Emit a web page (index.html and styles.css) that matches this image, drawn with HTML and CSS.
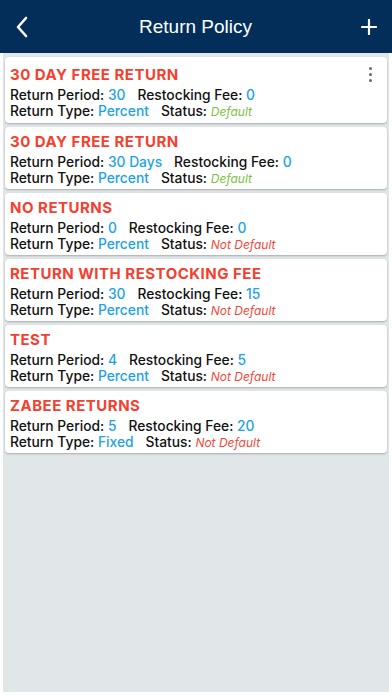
FILE: index.html
```html
<!DOCTYPE html>
<html lang="en">
<head>
    <meta charset="UTF-8">
    <meta name="viewport" content="width=device-width, initial-scale=1.0">
    <title>Return Policy</title>
    <link rel="stylesheet" href="styles.css">
</head>
<body>
    <header class="nav-bar">
        <button class="nav-btn" type="button" aria-label="Back">
            <svg width="14" height="22" viewBox="0 0 14 22"><path d="M11 2 L3 11 L11 20" fill="none" stroke="#fff" stroke-width="2.6" stroke-linecap="round" stroke-linejoin="round"/></svg>
        </button>
        <h1>Return Policy</h1>
        <button class="nav-btn" type="button" aria-label="Add">
            <svg width="16" height="16" viewBox="0 0 16 16"><path d="M8 1 V15 M1 8 H15" stroke="#fff" stroke-width="2.2" stroke-linecap="round"/></svg>
        </button>
    </header>

    <main class="list">
        <!-- Карточки политик возврата -->
        <div class="card">
            <div class="card-title">30 DAY FREE RETURN</div>
            <span class="menu-dots"><i></i><i></i><i></i></span>
            <div class="row"><span>Return Period: <b>30</b></span><span>Restocking Fee: <b>0</b></span></div>
            <div class="row"><span>Return Type: <b>Percent</b></span><span>Status: <em class="ok">Default</em></span></div>
        </div>
        <div class="card">
            <div class="card-title">30 DAY FREE RETURN</div>
            <div class="row"><span>Return Period: <b>30 Days</b></span><span>Restocking Fee: <b>0</b></span></div>
            <div class="row"><span>Return Type: <b>Percent</b></span><span>Status: <em class="ok">Default</em></span></div>
        </div>
        <div class="card">
            <div class="card-title">NO RETURNS</div>
            <div class="row"><span>Return Period: <b>0</b></span><span>Restocking Fee: <b>0</b></span></div>
            <div class="row"><span>Return Type: <b>Percent</b></span><span>Status: <em class="no">Not Default</em></span></div>
        </div>
        <div class="card">
            <div class="card-title">RETURN WITH RESTOCKING FEE</div>
            <div class="row"><span>Return Period: <b>30</b></span><span>Restocking Fee: <b>15</b></span></div>
            <div class="row"><span>Return Type: <b>Percent</b></span><span>Status: <em class="no">Not Default</em></span></div>
        </div>
        <div class="card">
            <div class="card-title">TEST</div>
            <div class="row"><span>Return Period: <b>4</b></span><span>Restocking Fee: <b>5</b></span></div>
            <div class="row"><span>Return Type: <b>Percent</b></span><span>Status: <em class="no">Not Default</em></span></div>
        </div>
        <div class="card">
            <div class="card-title">ZABEE RETURNS</div>
            <div class="row"><span>Return Period: <b>5</b></span><span>Restocking Fee: <b>20</b></span></div>
            <div class="row"><span>Return Type: <b>Fixed</b></span><span>Status: <em class="no">Not Default</em></span></div>
        </div>
    </main>
</body>
</html>
```

FILE: styles.css
```css
html, body {
    height: 100%;
}

body {
    margin: 0;
    font-family: Inter, "Liberation Sans", Arial, sans-serif;
    background: #fff;
    color: #111;
    display: flex;
    flex-direction: column;
}

.nav-bar {
    height: 53px;
    background-color: #022e59;
    display: flex;
    align-items: center;
    justify-content: space-between;
    padding: 0 13px 0 12px;
    flex-shrink: 0;
}

.nav-bar h1 {
    margin: 0;
    color: #fff;
    font-family: "Liberation Sans", Arial, sans-serif;
    font-size: 19px;
    font-weight: normal;
}

.nav-btn {
    background: none;
    border: none;
    padding: 0;
    width: 20px;
    height: 24px;
    display: flex;
    align-items: center;
    justify-content: center;
}

.list {
    flex: 1;
    margin: 0 3px 4px;
    background-color: #e1e6e9;
    padding: 4px 2px;
    display: flex;
    flex-direction: column;
    gap: 4px;
}

.card {
    position: relative;
    background: #fff;
    border-radius: 4px;
    box-shadow: 0 1px 2px rgba(0, 0, 0, 0.25);
    padding: 5px 5px 3px;
}

.card:first-child {
    padding-top: 8px;
    padding-bottom: 4px;
}

.card-title {
    color: #f5402f;
    font-weight: 700;
    font-size: 15px;
    letter-spacing: 0.5px;
    line-height: 20px;
    margin-bottom: 2px;
}

.row {
    display: flex;
    align-items: baseline;
    gap: 12px;
    height: 16px;
    font-size: 13.8px;
    font-weight: 500;
    line-height: 16px;
}

.row b {
    font-weight: 500;
    color: #1ca3e6;
}

.row em {
    font-size: 12px;
    font-weight: 400;
    line-height: 12px;
}

.ok {
    color: #7ac142;
}

.no {
    color: #f4473a;
}

.menu-dots {
    position: absolute;
    top: 10px;
    right: 15px;
    display: flex;
    flex-direction: column;
    gap: 3px;
}

.menu-dots i {
    width: 3px;
    height: 3px;
    border-radius: 50%;
    background: #5b6b78;
}
```
